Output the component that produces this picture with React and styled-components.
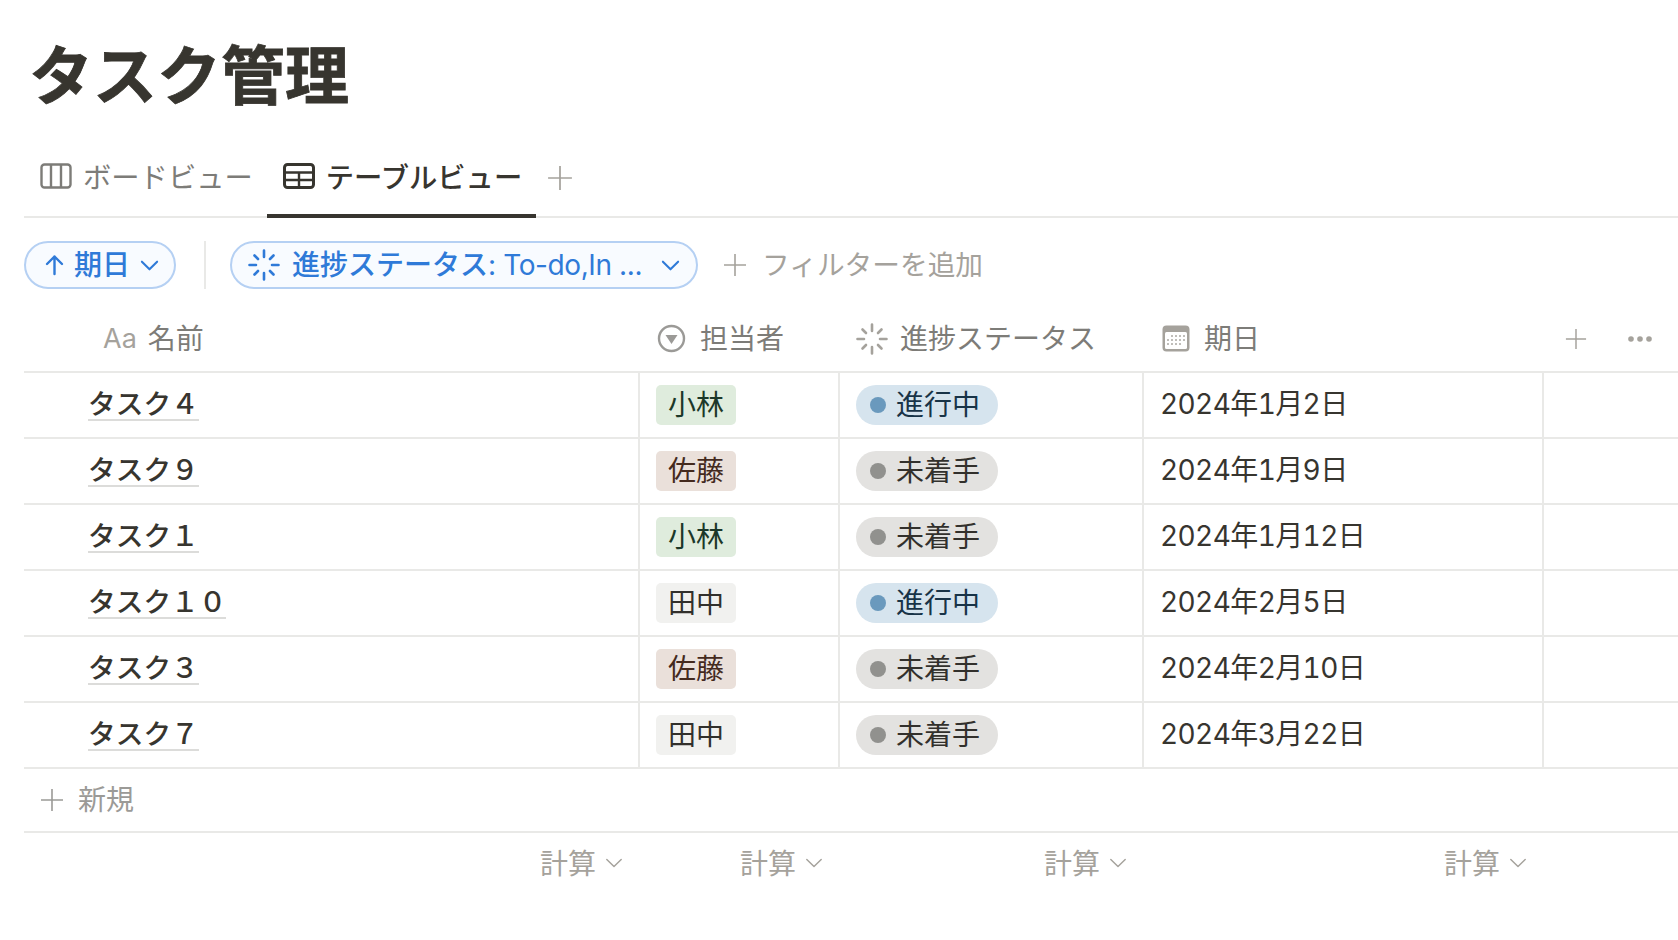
import React from 'react'
import styled, { createGlobalStyle } from 'styled-components'

const GlobalStyle = createGlobalStyle`
  html, body {
    margin: 0;
    padding: 0;
    background: #fff;
    overflow: hidden;
  }
  body {
    font-family: "Inter", "Noto Sans CJK JP", sans-serif;
    color: #37352f;
    font-size: 28px;
  }
`

const GRID = '616px 200px 304px 400px 1fr'

const Page = styled.div`
  width: 1678px;
  height: 940px;
  padding-left: 24px;
  box-sizing: border-box;
`
const Title = styled.h1`
  margin: 0;
  padding-left: 5px;
  height: 150px;
  line-height: 152px;
  font-size: 64px;
  font-weight: 700;
  -webkit-text-stroke: 0.8px #37352f;
  color: #37352f;
`
const TabBar = styled.div`
  display: flex;
  align-items: stretch;
  height: 68px;
  box-sizing: border-box;
  border-bottom: 2px solid #e9e9e7;
`
const Tab = styled.div`
  display: flex;
  align-items: center;
  gap: 11px;
  padding: 0 14px 13px 16px;
  margin-bottom: -2px;
  font-size: 28.3px;
  color: ${p => (p.$active ? '#37352f' : '#7d7c78')};
  border-bottom: 4px solid ${p => (p.$active ? '#37352f' : 'transparent')};
  font-weight: ${p => (p.$active ? 500 : 400)};
`
const TabAdd = styled.div`
  display: flex;
  align-items: center;
  color: #a5a29c;
  margin-left: 11px;
  padding-bottom: 11px;
`
const Toolbar = styled.div`
  display: flex;
  align-items: center;
  padding: 23px 0 17px 0;
`
const Chip = styled.div`
  display: flex;
  align-items: center;
  gap: ${p => p.$gap || 10}px;
  height: 48px;
  box-sizing: border-box;
  padding: 0 ${p => p.$right || 16}px 0 ${p => p.$left || 18}px;
  border: 2px solid #b5d0f3;
  border-radius: 24px;
  background: #f8fbff;
  color: #2f7ad8;
  font-weight: 500;
  white-space: nowrap;
`
const ChipLatin = styled.span`
  font-weight: 400;
  letter-spacing: -0.4px;
`
const Divider = styled.div`
  width: 2px;
  height: 48px;
  background: #e9e9e7;
  margin: 0 24px 0 28px;
`
const AddFilter = styled.div`
  display: flex;
  align-items: center;
  gap: 15px;
  margin-left: 25px;
  font-size: 27.7px;
  color: #a5a29c;
`
// nudges the CJK text up a little inside its flex row
const Label = styled.span`
  margin-bottom: ${p => p.$up || 0}px;
  margin-right: ${p => p.$right || 0}px;
`
const Row = styled.div`
  display: grid;
  grid-template-columns: ${GRID};
  height: ${p => p.$h || 66}px;
  box-sizing: border-box;
  border-bottom: 2px solid #e9e9e7;
`
const HeadCell = styled.div`
  display: flex;
  align-items: center;
  gap: ${p => p.$gap || 14}px;
  padding-left: ${p => p.$left || 16}px;
  color: #7d7c78;
`
const HeadIcon = styled.span`
  display: flex;
  color: #a5a29c;
`
const Aa = styled.span`
  color: #a5a29c;
  font-size: 27px;
`
const HeadActions = styled.div`
  display: flex;
  align-items: center;
  justify-content: space-between;
  padding: 0 26px 0 21px;
  color: #a5a29c;
`
const Cell = styled.div`
  display: flex;
  align-items: center;
  padding-left: ${p => p.$left || 16}px;
  border-right: ${p => (p.$last ? 'none' : '2px solid #e9e9e7')};
  white-space: nowrap;
`
const DateText = styled.span`
  font-variant-numeric: tabular-nums;
  letter-spacing: -0.6px;
  margin-bottom: 6px;
`
const Name = styled.span`
  line-height: 30px;
  font-size: 27.7px;
  border-bottom: 2px solid #dcdcda;
  font-weight: 500;
`
const Tag = styled.span`
  display: inline-flex;
  align-items: center;
  height: 40px;
  padding: 0 12px;
  border-radius: 5px;
  background: ${p => p.$bg};
  color: ${p => p.$fg};
`
const Status = styled.span`
  display: inline-flex;
  align-items: center;
  gap: 10px;
  height: 40px;
  padding: 0 18px 0 14px;
  border-radius: 20px;
  background: ${p => p.$bg};
  color: ${p => p.$fg};
`
const Dot = styled.i`
  width: 16px;
  height: 16px;
  border-radius: 50%;
  background: ${p => p.$color};
`
const NewRow = styled.div`
  display: flex;
  align-items: center;
  gap: 14px;
  height: 64px;
  box-sizing: border-box;
  padding-left: 16px;
  color: #9b9a97;
  border-bottom: 2px solid #e9e9e7;
`
const Footer = styled.div`
  display: grid;
  grid-template-columns: ${GRID};
  height: 60px;
`
const Calc = styled.div`
  display: flex;
  align-items: center;
  justify-content: flex-end;
  gap: 9px;
  padding-right: 17px;
  color: #a5a29c;
`

const Plus = ({ size = 24, w = 1.6 }) => (
  <svg width={size} height={size} viewBox="0 0 24 24" fill="none" stroke="currentColor" strokeWidth={w}>
    <path d="M12 1v22M1 12h22" />
  </svg>
)

const Chevron = ({ size = 19, w = 2.2 }) => (
  <svg width={size} height={size} viewBox="0 0 20 20" fill="none" stroke="currentColor" strokeWidth={w} strokeLinecap="round" strokeLinejoin="round">
    <path d="M2 6l8 8 8-8" />
  </svg>
)

const Spinner = ({ size = 32 }) => (
  <svg width={size} height={size} viewBox="0 0 32 32" fill="none" stroke="currentColor" strokeWidth="2.6" strokeLinecap="round">
    <path d="M16 1.5v6.5M16 24v6.5M1.5 16H8M24 16h6.5M6.5 6.5L10 10M22 22l3.5 3.5M25.5 6.5L22 10M10 22l-3.5 3.5" />
  </svg>
)

const BoardIcon = () => (
  <svg width="32" height="26" viewBox="0 0 32 26" fill="none" stroke="currentColor" strokeWidth="2.4">
    <rect x="1.5" y="1.5" width="29" height="23" rx="3" />
    <path d="M11 1.5v23M21 1.5v23" />
  </svg>
)

const TableIcon = () => (
  <svg width="32" height="26" viewBox="0 0 32 26" fill="none" stroke="currentColor" strokeWidth="3">
    <rect x="1.5" y="1.5" width="29" height="23" rx="3" />
    <path d="M1.5 9.5h29M1.5 17h29M16 9.5v15" strokeWidth="2.4" />
  </svg>
)

const ArrowUp = () => (
  <svg width="19" height="22" viewBox="0 0 19 22" fill="none" stroke="currentColor" strokeWidth="2.4" strokeLinecap="round" strokeLinejoin="round">
    <path d="M9.5 20V2.5M2 10l7.5-7.5L17 10" />
  </svg>
)

const SelectIcon = () => (
  <svg width="29" height="29" viewBox="0 0 29 29">
    <circle cx="14.5" cy="14.5" r="12.5" fill="none" stroke="#9b9a97" strokeWidth="2.4" />
    <path d="M8.5 11h12l-6 9z" fill="#9b9a97" />
  </svg>
)

const CALENDAR_DOTS = [
  [11, [10, 14, 18, 22]],
  [15, [6, 10, 14, 18, 22]],
  [19, [6, 10, 14, 18]],
]

const CalendarIcon = () => (
  <svg width="28" height="27" viewBox="0 0 28 27">
    <rect x="0.5" y="0.5" width="27" height="26" rx="4" fill="#a5a29c" />
    <rect x="3" y="7" width="22" height="17" rx="1.5" fill="#fff" />
    <g fill="#a5a29c">
      {CALENDAR_DOTS.map(([y, xs]) =>
        xs.map(x => <circle key={`${x}-${y}`} cx={x} cy={y} r="0.95" />)
      )}
    </g>
  </svg>
)

const Dots = () => (
  <svg width="24" height="6" viewBox="0 0 24 6" fill="currentColor">
    <circle cx="3" cy="3" r="2.8" />
    <circle cx="12" cy="3" r="2.8" />
    <circle cx="21" cy="3" r="2.8" />
  </svg>
)

const PEOPLE = {
  小林: { bg: '#dfecdd', fg: '#1c3829' },
  佐藤: { bg: '#eae0da', fg: '#442a1e' },
  田中: { bg: '#f1f1ef', fg: '#32302c' },
}

const STATUS = {
  進行中: { bg: '#d6e4ee', fg: '#183347', dot: '#6a99bd' },
  未着手: { bg: '#e3e2e0', fg: '#32302c', dot: '#91918e' },
}

const tasks = [
  { name: 'タスク４', person: '小林', status: '進行中', date: '2024年1月2日' },
  { name: 'タスク９', person: '佐藤', status: '未着手', date: '2024年1月9日' },
  { name: 'タスク１', person: '小林', status: '未着手', date: '2024年1月12日' },
  { name: 'タスク１０', person: '田中', status: '進行中', date: '2024年2月5日' },
  { name: 'タスク３', person: '佐藤', status: '未着手', date: '2024年2月10日' },
  { name: 'タスク７', person: '田中', status: '未着手', date: '2024年3月22日' },
]

export default function App() {
  return (
    <Page>
      <GlobalStyle />
      <Title>タスク管理</Title>

      <TabBar>
        <Tab>
          <BoardIcon />
          ボードビュー
        </Tab>
        <Tab $active>
          <TableIcon />
          テーブルビュー
        </Tab>
        <TabAdd>
          <Plus size={26} />
        </TabAdd>
      </TabBar>

      <Toolbar>
        <Chip $left={19} $right={15}>
          <ArrowUp />
          <Label $up={4}>期日</Label>
          <Chevron />
        </Chip>
        <Divider />
        <Chip $gap={12} $left={16} $right={16}>
          <Spinner />
          <Label $up={4} $right={7}>
            進捗ステータス<ChipLatin>: To-do,In ...</ChipLatin>
          </Label>
          <Chevron />
        </Chip>
        <AddFilter>
          <Plus />
          <Label $up={4}>フィルターを追加</Label>
        </AddFilter>
      </Toolbar>

      <Row $h={67}>
        <HeadCell $left={79} $gap={11}>
          <Aa>Aa</Aa>
          <Label $up={3}>名前</Label>
        </HeadCell>
        <HeadCell $left={17}>
          <SelectIcon />
          <Label $up={3}>担当者</Label>
        </HeadCell>
        <HeadCell $gap={12}>
          <HeadIcon><Spinner /></HeadIcon>
          <Label $up={3}>進捗ステータス</Label>
        </HeadCell>
        <HeadCell $left={18}>
          <CalendarIcon />
          <Label $up={3}>期日</Label>
        </HeadCell>
        <HeadActions>
          <Plus size={22} />
          <Dots />
        </HeadActions>
      </Row>

      {tasks.map(task => (
        <Row key={task.name}>
          <Cell $left={64}>
            <Name>{task.name}</Name>
          </Cell>
          <Cell>
            <Tag $bg={PEOPLE[task.person].bg} $fg={PEOPLE[task.person].fg}>
              <Label $up={4}>{task.person}</Label>
            </Tag>
          </Cell>
          <Cell>
            <Status $bg={STATUS[task.status].bg} $fg={STATUS[task.status].fg}>
              <Dot $color={STATUS[task.status].dot} />
              <Label $up={4}>{task.status}</Label>
            </Status>
          </Cell>
          <Cell>
            <DateText>{task.date}</DateText>
          </Cell>
          <Cell $last />
        </Row>
      ))}

      <NewRow>
        <Plus />
        <Label $up={4}>新規</Label>
      </NewRow>

      <Footer>
        {[0, 1, 2, 3].map(i => (
          <Calc key={i}>
            <Label $up={2}>計算</Label>
            <Chevron size={18} w={1.6} />
          </Calc>
        ))}
      </Footer>
    </Page>
  )
}
